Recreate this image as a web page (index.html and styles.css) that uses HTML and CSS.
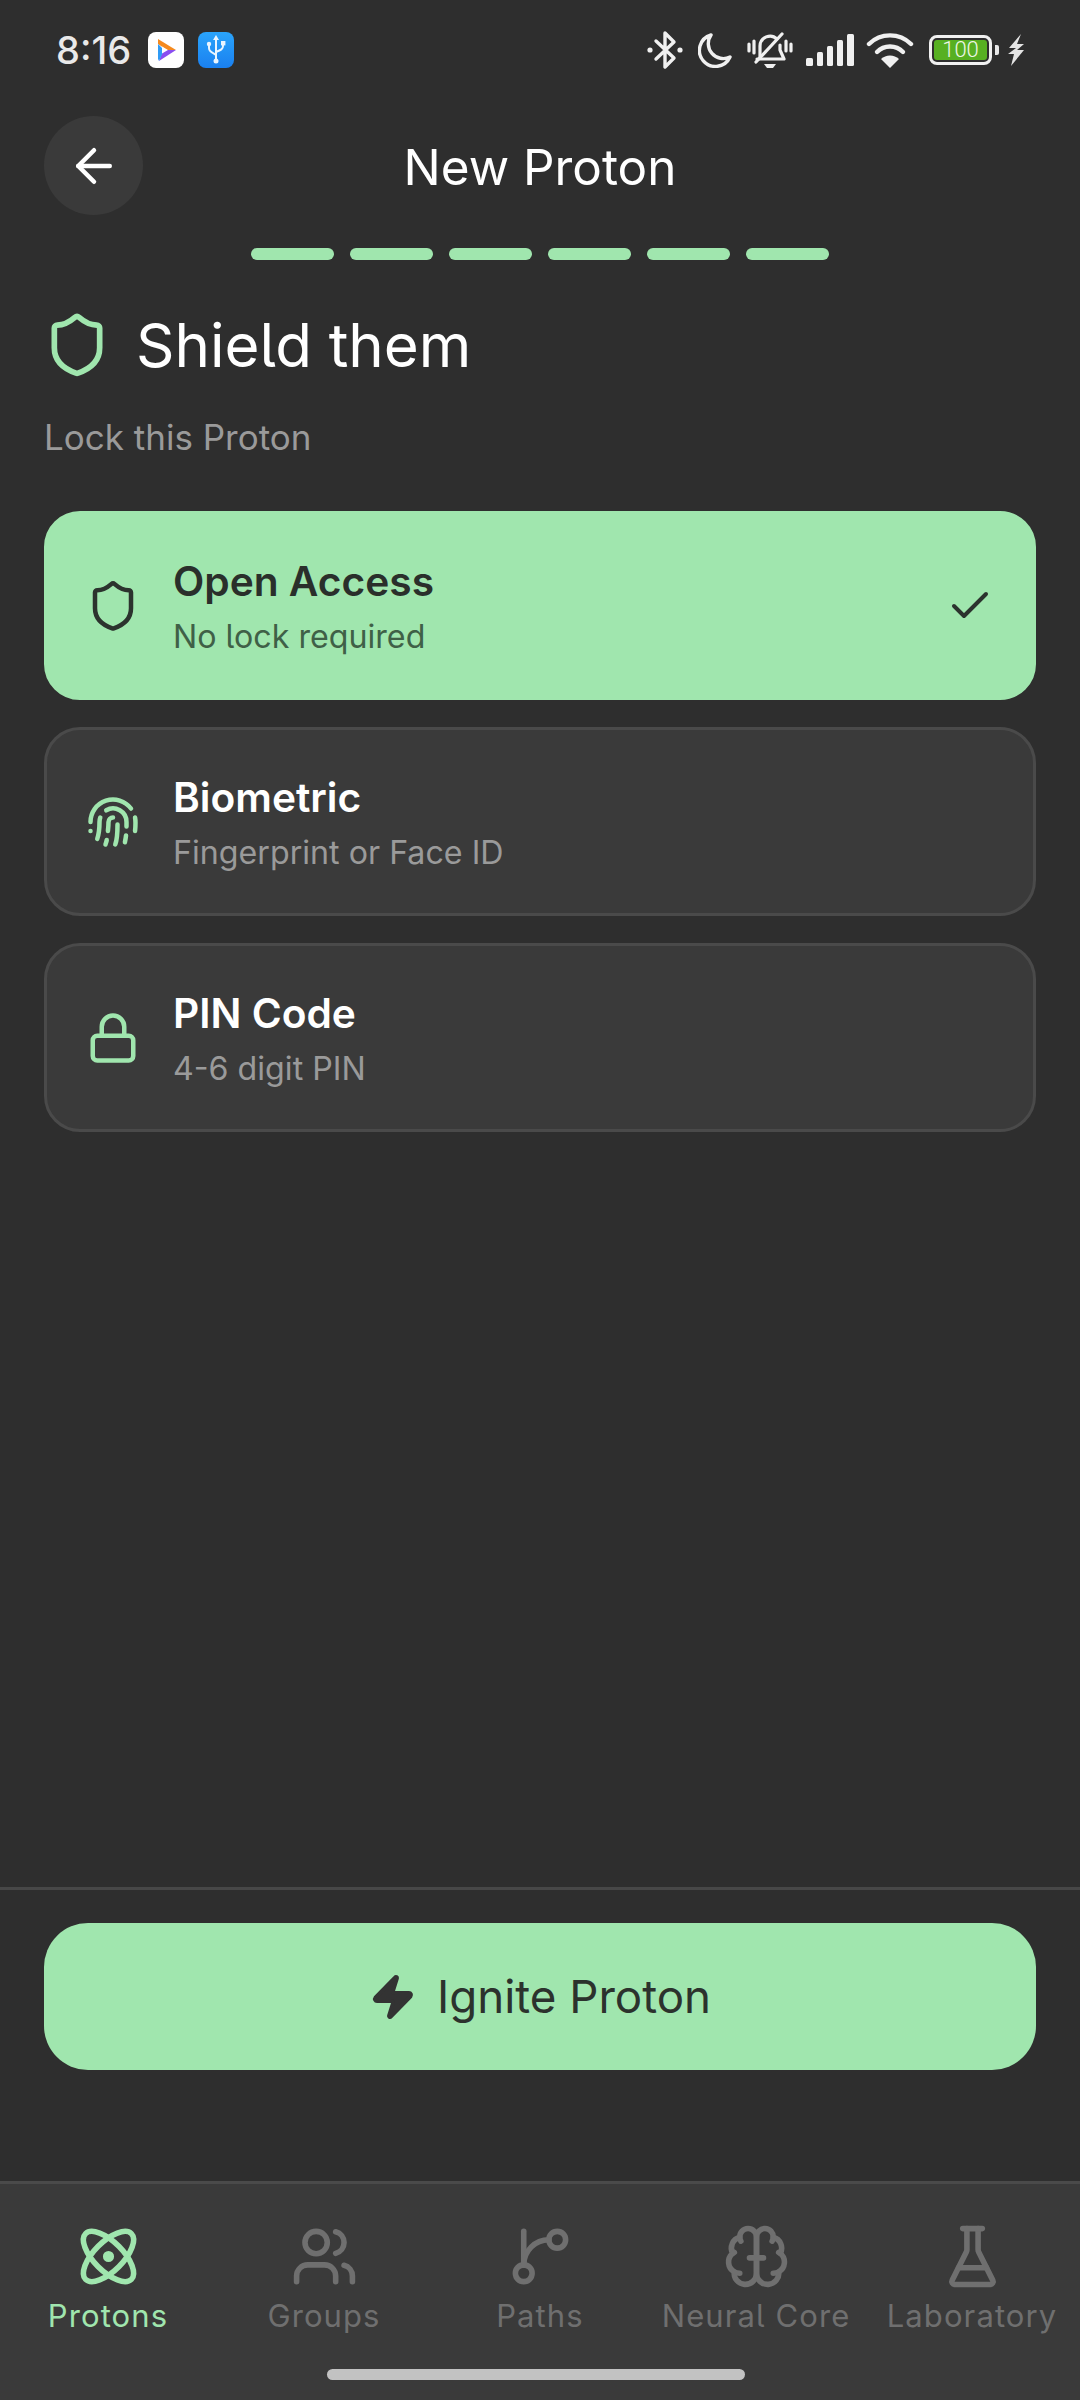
FILE: index.html
```html
<!DOCTYPE html>
<html lang="en">
<head>
<meta charset="utf-8">
<title>New Proton</title>
<link rel="stylesheet" href="styles.css">
</head>
<body>
<div class="phone">
  <div class="statusbar">
    <span class="time">8:16</span>
    <svg class="app-icon" viewBox="0 0 36 36"><rect width="36" height="36" rx="8" fill="#fff"/><path d="M10 7 L28 18 L19 18 L10 12Z" fill="#f58a1f"/><path d="M28 18 L11 29 L15 18Z" fill="#8a4df0"/><path d="M10 12 L16 18 L11 29 L10 27Z" fill="#2f9bf5"/><path d="M14 14.5 L20 18 L14 21.5Z" fill="#fff"/></svg>
    <svg class="app-icon blue" viewBox="0 0 36 36"><defs><linearGradient id="usbg" x1="0" y1="0" x2="0" y2="1"><stop offset="0" stop-color="#2aa4fb"/><stop offset="1" stop-color="#1a80f0"/></linearGradient></defs><rect width="36" height="36" rx="8" fill="url(#usbg)"/><g fill="none" stroke="#eaf5ff" stroke-width="2"><path d="M18 6V28"/><path d="M11 13v3c0 3 2 4 7 7"/><path d="M25 12v2c0 3-2 4-7 6"/></g><circle cx="18" cy="29" r="2.5" fill="#eaf5ff"/><path d="M18 3l3 5h-6z" fill="#eaf5ff"/><circle cx="11" cy="12" r="2.2" fill="#eaf5ff"/><rect x="23" y="9" width="4.4" height="4.4" fill="#eaf5ff"/></svg>
    <div class="status-right">
      <svg class="st st-bt" viewBox="0 0 36 40"><path d="M9 11 L27 28 L18 37 V3 L27 12 L9 29" fill="none" stroke="#f0f0f0" stroke-width="3.4" stroke-linejoin="round" stroke-linecap="round"/><circle cx="3" cy="20" r="2.6" fill="#f0f0f0"/><circle cx="33" cy="20" r="2.6" fill="#f0f0f0"/></svg>
      <svg class="st st-moon" viewBox="0 0 34 36"><path d="M13 3 A16 16 0 1 0 32 25 A15 15 0 0 1 13 3Z" fill="none" stroke="#f0f0f0" stroke-width="3.4" stroke-linejoin="round"/></svg>
      <svg class="st st-bell" viewBox="0 0 46 38"><g fill="none" stroke="#f0f0f0" stroke-width="3.2" stroke-linecap="round" stroke-linejoin="round"><path d="M13 27 V15 A10 10 0 0 1 30 8"/><path d="M33 14 V19 L37 28 H10"/><path d="M35 3 L9 31"/><path d="M2 13v7"/><path d="M7 10v12"/><path d="M44 13v7"/><path d="M39 10v10"/></g><path d="M17 33h12l-3 4h-6z" fill="#f0f0f0"/></svg>
      <svg class="st st-signal" viewBox="0 0 48 32" fill="#f0f0f0"><rect x="0" y="24" width="7" height="8" rx="1.5"/><rect x="11" y="18" width="6" height="14" rx="1.5"/><rect x="21" y="12" width="6" height="20" rx="1.5"/><rect x="31" y="6" width="6" height="26" rx="1.5"/><rect x="41" y="0" width="7" height="32" rx="1.5"/></svg>
      <svg class="st st-wifi" viewBox="0 0 48 36"><g fill="none" stroke="#f0f0f0" stroke-width="4.4" stroke-linecap="round"><path d="M3 12 A30 30 0 0 1 45 12"/><path d="M11 20 A18 18 0 0 1 37 20"/></g><path d="M24 36 L15 27 A13 13 0 0 1 33 27Z" fill="#f0f0f0"/></svg>
      <div class="battery"><div class="battery-body"><span class="battery-fill">100</span></div><span class="battery-tip"></span></div>
      <svg class="st st-bolt" viewBox="0 0 18 32"><path d="M14 0 L2 14 H9 L1 20 H7 L4 32 L17 16 H10 L17 10 H10Z" fill="#e4e4e4"/></svg>
    </div>
  </div>

  <header class="topbar">
    <button class="back" type="button" aria-label="Back">
      <svg class="ic ic-back" viewBox="0 0 24 24"><path d="m12 19-7-7 7-7"/><path d="M19 12H5"/></svg>
    </button>
    <div class="topbar-title">New Proton</div>
    <span class="topbar-spacer"></span>
  </header>

  <div class="steps">
    <span class="step"></span><span class="step"></span><span class="step"></span><span class="step"></span><span class="step"></span><span class="step"></span>
  </div>

  <main class="content">
    <div class="heading">
      <svg class="ic ic-heading" viewBox="0 0 24 24"><path d="M20 13c0 5-3.5 7.5-7.66 8.95a1 1 0 0 1-.67-.01C7.5 20.5 4 18 4 13V6a1 1 0 0 1 1-1c2 0 4.5-1.2 6.24-2.72a1.17 1.17 0 0 1 1.52 0C14.51 3.81 17 5 19 5a1 1 0 0 1 1 1z"/></svg>
      <h1>Shield them</h1>
    </div>
    <p class="subtitle">Lock this Proton</p>

    <div class="options">
      <div class="option selected">
        <svg class="ic ic-opt" viewBox="0 0 24 24"><path d="M20 13c0 5-3.5 7.5-7.66 8.95a1 1 0 0 1-.67-.01C7.5 20.5 4 18 4 13V6a1 1 0 0 1 1-1c2 0 4.5-1.2 6.24-2.72a1.17 1.17 0 0 1 1.52 0C14.51 3.81 17 5 19 5a1 1 0 0 1 1 1z"/></svg>
        <div class="option-text">
          <div class="option-title">Open Access</div>
          <div class="option-sub">No lock required</div>
        </div>
        <svg class="ic ic-check" viewBox="0 0 24 24"><path d="M20 6 9 17l-5-5"/></svg>
      </div>
      <div class="option">
        <svg class="ic ic-opt" viewBox="0 0 24 24"><path d="M12 10a2 2 0 0 0-2 2c0 1.02-.1 2.51-.26 4"/><path d="M14 13.12c0 2.38 0 6.38-1 8.88"/><path d="M17.29 21.02c.12-.6.43-2.3.5-3.02"/><path d="M2 12a10 10 0 0 1 18-6"/><path d="M2 16h.01"/><path d="M21.8 16c.2-2 .131-5.354 0-6"/><path d="M5 19.5C5.5 18 6 15 6 12a6 6 0 0 1 .34-2"/><path d="M8.65 22c.21-.66.45-1.32.57-2"/><path d="M9 6.8a6 6 0 0 1 9 5.2v2"/></svg>
        <div class="option-text">
          <div class="option-title">Biometric</div>
          <div class="option-sub">Fingerprint or Face ID</div>
        </div>
      </div>
      <div class="option">
        <svg class="ic ic-opt" viewBox="0 0 24 24"><rect width="18" height="11" x="3" y="11" rx="2" ry="2"/><path d="M7 11V7a5 5 0 0 1 10 0v4"/></svg>
        <div class="option-text">
          <div class="option-title">PIN Code</div>
          <div class="option-sub">4-6 digit PIN</div>
        </div>
      </div>
    </div>
  </main>

  <div class="footer">
    <button class="ignite" type="button">
      <svg class="ic-zap" viewBox="0 0 24 24"><path d="M4 14a1 1 0 0 1-.78-1.63l9.9-10.2a.5.5 0 0 1 .86.46l-1.92 6.02A1 1 0 0 0 13 10h7a1 1 0 0 1 .78 1.63l-9.9 10.2a.5.5 0 0 1-.86-.46l1.92-6.02A1 1 0 0 0 11 14z"/></svg>
      <span>Ignite Proton</span>
    </button>
  </div>

  <nav class="tabbar">
    <div class="tab active">
      <svg class="ic ic-tab" viewBox="0 0 24 24"><circle cx="12" cy="12" r="1"/><path d="M20.2 20.2c2.04-2.03.02-7.36-4.5-11.9-4.54-4.52-9.87-6.54-11.9-4.5-2.04 2.03-.02 7.36 4.5 11.9 4.54 4.52 9.87 6.54 11.9 4.5Z"/><path d="M15.7 15.7c4.52-4.54 6.54-9.87 4.5-11.9-2.03-2.04-7.36-.02-11.9 4.5-4.52 4.54-6.54 9.87-4.5 11.9 2.03 2.04 7.36.02 11.9-4.5Z"/></svg>
      <span class="tab-label">Protons</span>
    </div>
    <div class="tab">
      <svg class="ic ic-tab" viewBox="0 0 24 24"><path d="M16 21v-2a4 4 0 0 0-4-4H6a4 4 0 0 0-4 4v2"/><circle cx="9" cy="7" r="4"/><path d="M22 21v-2a4 4 0 0 0-3-3.87"/><path d="M16 3.13a4 4 0 0 1 0 7.75"/></svg>
      <span class="tab-label">Groups</span>
    </div>
    <div class="tab">
      <svg class="ic ic-tab" viewBox="0 0 24 24"><path d="M6 3v12"/><circle cx="18" cy="6" r="3"/><circle cx="6" cy="18" r="3"/><path d="M15 6a9 9 0 0 0-9 9"/></svg>
      <span class="tab-label">Paths</span>
    </div>
    <div class="tab">
      <svg class="ic ic-tab" viewBox="0 0 24 24"><path d="M12 5a3 3 0 1 0-5.997.125 4 4 0 0 0-2.526 5.77 4 4 0 0 0 .556 6.588A4 4 0 1 0 12 18Z"/><path d="M12 5a3 3 0 1 1 5.997.125 4 4 0 0 1 2.526 5.77 4 4 0 0 1-.556 6.588A4 4 0 1 1 12 18Z"/><path d="M9.5 12.5h5"/><path d="M17.599 6.5a3 3 0 0 0 .399-1.375"/><path d="M6.003 5.125A3 3 0 0 0 6.401 6.5"/><path d="M3.477 10.896a4 4 0 0 1 .585-.396"/><path d="M19.938 10.5a4 4 0 0 1 .585.396"/><path d="M6 18a4 4 0 0 1-1.967-.516"/><path d="M19.967 17.484A4 4 0 0 1 18 18"/></svg>
      <span class="tab-label">Neural Core</span>
    </div>
    <div class="tab">
      <svg class="ic ic-tab" viewBox="0 0 24 24"><path d="M10 2v7.527a2 2 0 0 1-.211.896L4.72 20.55a1 1 0 0 0 .9 1.45h12.76a1 1 0 0 0 .9-1.45l-5.069-10.127A2 2 0 0 1 14 9.527V2"/><path d="M8.5 2h7"/><path d="M7 16h10"/></svg>
      <span class="tab-label">Laboratory</span>
    </div>
    <span class="home-bar"></span>
  </nav>
</div>
</body>
</html>
```

FILE: styles.css
```css
* { box-sizing: border-box; }
html, body { margin: 0; padding: 0; }
body { background: #2e2e2e; font-family: "Inter", "Noto Sans", sans-serif; font-feature-settings: "cv05"; color: #fff; }
.phone { width: 1080px; height: 2400px; display: flex; flex-direction: column; background: #2e2e2e; overflow: hidden; }

.statusbar { height: 100px; display: flex; align-items: center; padding: 0 55px 0 56px; }
.time { font-size: 38px; font-weight: 500; color: #e9e9e9; width: 92px; }
.app-icon { width: 36px; height: 36px; }
.app-icon.blue { margin-left: 14px; }
.status-right { margin-left: auto; display: flex; align-items: center; }
.st { display: block; }
.st-bt { width: 36px; height: 40px; }
.st-moon { width: 34px; height: 36px; margin-left: 15px; }
.st-bell { width: 46px; height: 38px; margin-left: 15px; }
.st-signal { width: 48px; height: 32px; margin-left: 13px; }
.st-wifi { width: 48px; height: 36px; margin-left: 12px; }
.st-bolt { width: 18px; height: 32px; margin-left: 8px; }
.battery { display: flex; align-items: center; margin-left: 15px; }
.battery-body { width: 63px; height: 30px; border: 3px solid #f0f0f0; border-radius: 8px; padding: 2px; display: flex; }
.battery-fill { flex: 1; background: #57b022; border-radius: 3px; color: #eef7e6; font-size: 22px; line-height: 20px; text-align: center; font-family: "Roboto", sans-serif; font-weight: 300; }
.battery-tip { width: 4px; height: 10px; background: #e8e8e8; border-radius: 0 2px 2px 0; margin-left: 3px; }

.ic { fill: none; stroke: currentColor; stroke-width: 2; stroke-linecap: round; stroke-linejoin: round; display: block; flex: none; }

.topbar { margin-top: 16px; padding: 0 44px; display: grid; grid-template-columns: 99px 1fr 99px; align-items: center; }
.back { width: 99px; height: 99px; border-radius: 50%; border: 0; background: #3a3a3a; color: #fff; padding: 0; display: flex; align-items: center; justify-content: center; }
.ic-back { width: 54px; height: 54px; }
.topbar-title { text-align: center; font-size: 49.4px; line-height: 60px; font-weight: 400; padding-top: 2px; }

.steps { margin-top: 33px; display: flex; justify-content: center; gap: 16px; }
.step { width: 83px; height: 12px; border-radius: 6px; background: #a0e6ae; }

.content { flex: 1; padding: 0 44px; display: flex; flex-direction: column; }
.heading { margin-top: 49px; margin-left: -1px; display: flex; align-items: center; gap: 25px; color: #a0e6ae; }
.ic-heading { width: 68px; height: 68px; }
.heading h1 { margin: 0; font-size: 60px; line-height: 72px; font-weight: 400; color: #fff; }
.subtitle { margin: 34px 0 0; font-size: 35px; line-height: 44px; color: #9a9a9a; }

.options { margin-top: 52px; display: flex; flex-direction: column; gap: 27px; }
.option { height: 189px; border-radius: 36px; background: #3a3a3a; border: 3px solid #4a4a4a; padding: 0 39px 0 39px; display: flex; align-items: center; gap: 33px; color: #a0e6ae; }
.option.selected { background: #a0e6ae; border-color: #a0e6ae; color: #2c332e; }
.ic-opt { width: 54px; height: 54px; }
.option-text { flex: 1; display: flex; flex-direction: column; gap: 9px; padding-top: 3px; }
.option-title { font-size: 40.7px; line-height: 50px; font-weight: 600; color: #fff; }
.option-sub { font-size: 32.2px; line-height: 42px; color: #9a9a9a; }
.selected .option-title { color: #2a2f2b; }
.selected .option-sub { color: #3f6047; }
.ic-check { width: 48px; height: 48px; }

.footer { height: 294px; border-top: 3px solid #474747; padding: 33px 44px 0; flex: none; }
.ignite { width: 100%; height: 147px; border: 0; border-radius: 44px; background: #a0e6ae; color: #2c322d; display: flex; align-items: center; justify-content: center; gap: 20px; font-family: inherit; font-feature-settings: inherit; font-size: 45.7px; }
.ic-zap { width: 48px; height: 48px; fill: #333; stroke: #333; stroke-width: 2; stroke-linejoin: round; display: block; }

.tabbar { position: relative; height: 219px; flex: none; background: #3a3a3a; border-top: 3px solid #4a4a4a; display: grid; grid-template-columns: repeat(5, 216px); }
.tab { display: flex; flex-direction: column; align-items: center; padding-top: 39px; color: #6f6f6f; }
.tab.active { color: #a0e6ae; }
.ic-tab { width: 67px; height: 67px; stroke-width: 2; }
.tab-label { margin-top: 7px; font-size: 31px; line-height: 38px; letter-spacing: 1.1px; white-space: nowrap; }
.home-bar { position: absolute; left: 327px; bottom: 20px; width: 418px; height: 11px; border-radius: 6px; background: #c2c2c2; }
```
